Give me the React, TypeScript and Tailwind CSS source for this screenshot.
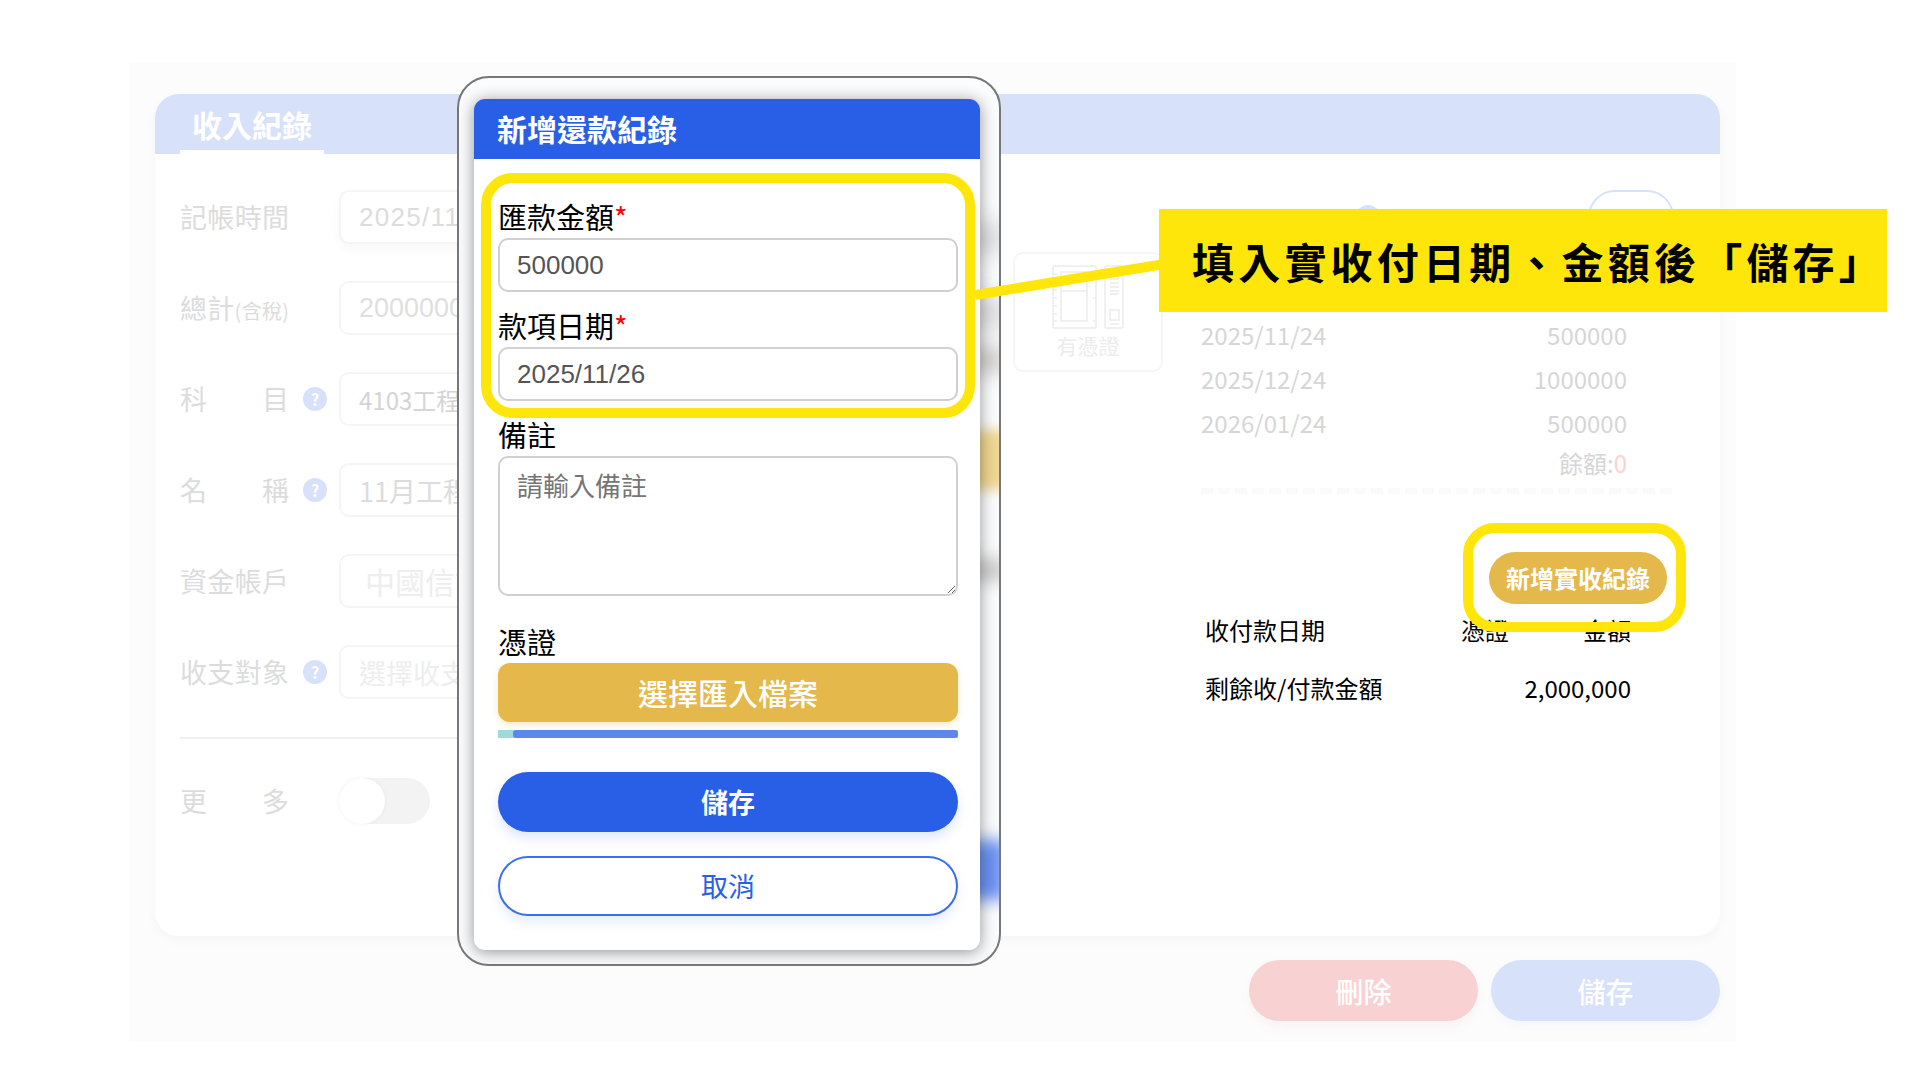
import type { ReactNode } from "react";

const schedule = [
  { date: "2025/11/24", amount: "500000" },
  { date: "2025/12/24", amount: "1000000" },
  { date: "2026/01/24", amount: "500000" },
];

function Help({ label }: { label: string }) {
  return (
    <button
      type="button"
      aria-label={label}
      className="flex size-6 items-center justify-center rounded-full bg-[#d8e1fa] text-base font-bold text-white"
    >
      ?
    </button>
  );
}

function Row({ id, label, help, children }: { id: string; label: ReactNode; help?: boolean; children: ReactNode }) {
  return (
    <div className="flex h-[54px] items-center">
      <label
        htmlFor={id}
        className="w-[109px] text-[27px] whitespace-nowrap text-[#dcdcdc] [text-align-last:justify]"
      >
        {label}
      </label>
      <div className="mr-3 ml-[14px] w-6">{help && <Help label="說明" />}</div>
      {children}
    </div>
  );
}

const fieldBox = "h-[54px] min-w-0 flex-1 rounded-[10px] border-2 border-[#f5f5f5] bg-white px-[18px] outline-none";

function VoucherIcon() {
  return (
    <svg className="h-[66px] w-[74px]" viewBox="0 0 74 66" fill="none" stroke="#f0f0f0" strokeWidth="2" aria-hidden="true">
      <rect x="2" y="2" width="43" height="62" rx="2" />
      <rect x="10" y="8" width="26" height="49" />
      <path d="M10 13h26M10 27h26" />
      <path d="M2 10h4M2 18h4M2 26h4M2 34h4M2 42h4M2 50h4M2 57h4M45 10h-3M45 34h-3M45 57h-3" />
      <rect x="54" y="2" width="18" height="62" rx="2" />
      <path d="M59 15h9M59 19h9M59 23h9M59 27h9M59 30h9M59 60h9" />
      <rect x="59" y="46" width="9" height="10" />
    </svg>
  );
}

function RecordPage() {
  return (
    <main className="mt-[62px] mr-[184px] ml-[129px] bg-[#fcfcfc] pt-8 pr-4 pb-[21px] pl-[26px]">
      <section className="overflow-hidden rounded-[24px] bg-white shadow-[0_4px_12px_rgba(0,0,0,0.03)]">
        <header className="flex h-[60px] items-end bg-[#d8e1fa] pl-[25px]">
          <h1 className="border-b-4 border-white px-3 text-[30px] leading-[52px] font-bold text-white">
            收入紀錄
          </h1>
        </header>

        <div className="flex justify-between pr-[43px] pl-[25px]">
          <form className="flex w-[480px] flex-col pt-9 pb-[111px]">
            <div className="flex flex-col gap-[37px]">
              <Row id="time" label="記帳時間">
                <input
                  id="time"
                  defaultValue="2025/11/24"
                  className={`${fieldBox} font-['Liberation_Sans','Noto_Sans_CJK_TC',sans-serif] text-[26px] tracking-wider text-[#dcdcdc] shadow-[0_6px_12px_rgba(0,0,0,0.03)]`}
                />
              </Row>
              <Row
                id="total"
                label={
                  <>
                    總計<small className="text-[20px]">(含稅)</small>
                  </>
                }
              >
                <input
                  id="total"
                  defaultValue="2000000"
                  className={`${fieldBox} font-['Liberation_Sans','Noto_Sans_CJK_TC',sans-serif] text-[27px] text-[#dfdfdf]`}
                />
              </Row>
              <Row id="subject" label="科　目" help>
                <input id="subject" defaultValue="4103工程收入" className={`${fieldBox} text-2xl text-[#d4d4d4]`} />
              </Row>
              <Row id="name" label="名　稱" help>
                <input id="name" defaultValue="11月工程款" className={`${fieldBox} text-[27px] text-[#dcdcdc]`} />
              </Row>
              <Row id="account" label="資金帳戶">
                <input
                  id="account"
                  defaultValue="中國信託"
                  className={`${fieldBox} pl-6 text-[30px] text-[#eeeeee]`}
                />
              </Row>
              <Row id="party" label="收支對象" help>
                <input
                  id="party"
                  placeholder="選擇收支對象"
                  className={`${fieldBox} text-[27px] placeholder:text-[#eeeeee]`}
                />
              </Row>
            </div>
            <hr className="mt-[38px] border-t-2 border-[#f0f0f0]" />
            <div className="mt-[38px] flex h-12 items-center">
              <label htmlFor="more" className="w-[109px] text-[27px] text-[#dcdcdc] [text-align-last:justify]">
                更　多
              </label>
              <input
                id="more"
                type="checkbox"
                role="switch"
                className="ml-[50px] h-[46px] w-[91px] appearance-none rounded-full bg-[#f3f3f3] before:block before:size-[46px] before:rounded-full before:bg-white before:shadow-[0_0_4px_rgba(0,0,0,0.05)] before:content-['']"
              />
            </div>
          </form>

          <div className="flex">
            <button
              type="button"
              className="mt-[98px] mr-[38px] flex h-[120px] w-[150px] flex-col items-center rounded-[10px] border-2 border-[#f6f6f6] pt-[10px] text-[21px] leading-[30px] text-[#ececec]"
            >
              <VoucherIcon />
              有憑證
            </button>

            <aside className="w-[476px] pt-9 text-2xl">
              <div className="flex h-[54px] items-center justify-between pr-[3px] pl-[155px]">
                <Help label="分期說明" />
                <button
                  type="button"
                  aria-label="編輯"
                  className="h-[54px] w-[86px] rounded-full border-2 border-[#d8e1fa] bg-white"
                />
              </div>
              <table className="mt-[69px] w-full text-[#d6d6d6]">
                <tbody>
                  {schedule.map((r) => (
                    <tr key={r.date} className="h-11">
                      <td>{r.date}</td>
                      <td className="pr-[50px] text-right">{r.amount}</td>
                    </tr>
                  ))}
                  <tr className="h-9">
                    <td />
                    <td className="pr-[50px] text-right">
                      餘額:<span className="text-[#ffd0d0]">0</span>
                    </td>
                  </tr>
                </tbody>
              </table>
              <div className="mt-[7px] h-[6px] bg-[repeating-linear-gradient(90deg,#fafafa_0_12px,transparent_12px_17px)]" />
              <div className="mt-[58px] flex justify-end pr-[10px]">
                <div className="relative">
                  <button
                    type="button"
                    className="h-[52px] rounded-full bg-[#e4b84a] px-[17px] font-bold whitespace-nowrap text-white"
                  >
                    新增實收紀錄
                  </button>
                  <div className="pointer-events-none absolute -top-[29px] -right-[19px] -bottom-7 -left-[26px] rounded-[32px] border-10 border-[#ffe60a]" />
                </div>
              </div>
              <table className="w-full text-black">
                <thead>
                  <tr className="h-[52px]">
                    <th className="pl-1 text-left font-normal">收付款日期</th>
                    <th className="text-right font-normal">憑證</th>
                    <th className="w-[168px] pr-[46px] text-right font-normal">金額</th>
                  </tr>
                </thead>
                <tbody>
                  <tr className="h-16">
                    <td className="pl-1">剩餘收/付款金額</td>
                    <td colSpan={2} className="pr-[46px] text-right">
                      2,000,000
                    </td>
                  </tr>
                </tbody>
              </table>
            </aside>
          </div>
        </div>
      </section>

      <footer className="mt-6 flex justify-end gap-[13px] text-[28px] font-medium text-white">
        <button
          type="button"
          className="h-[61px] w-[229px] rounded-full bg-[#f8d2d2] shadow-[0_6px_12px_rgba(240,80,80,0.06)]"
        >
          刪除
        </button>
        <button
          type="button"
          className="h-[61px] w-[229px] rounded-full bg-[#d8e1fa] shadow-[0_4px_8px_rgba(40,95,230,0.04)]"
        >
          儲存
        </button>
      </footer>
    </main>
  );
}

const modalLabel = "mb-1 block text-[29px] leading-9";
const modalField =
  "block w-full rounded-[10px] border-2 border-[#d0d0d0] bg-white px-[17px] text-[26px] text-[#555555] outline-none";

function RepaymentDialog() {
  return (
    <div className="absolute top-[76px] left-[457px] w-[544px] overflow-hidden rounded-[32px] border-2 border-[#777777] bg-[#fbfcfd] pt-[21px] pr-[19px] pb-[14px] pl-[15px]">
      <div className="absolute top-[146px] -right-2 h-[28px] w-10 bg-[#d4d6da] blur-[12px]" />
      <div className="absolute top-[220px] -right-2 h-[30px] w-10 bg-[#d6d6d8] blur-[12px]" />
      <div className="absolute top-[270px] -right-2 h-[24px] w-10 bg-[#ccc9c6] blur-[10px]" />
      <div className="absolute top-[352px] -right-2 h-[60px] w-10 bg-[#efd591] blur-[6px]" />
      <div className="absolute top-[480px] -right-2 h-[24px] w-10 bg-[#cccccc] blur-[8px]" />
      <div className="absolute top-[762px] -right-2 h-[60px] w-10 bg-[#6a90f0] blur-[8px]" />

      <div
        role="dialog"
        aria-labelledby="dialog-title"
        className="relative rounded-[11px] bg-white shadow-[0_2px_16px_rgba(0,0,0,0.42)]"
      >
        <h2
          id="dialog-title"
          className="flex h-[60px] items-center rounded-t-[11px] bg-[#285fe6] px-[23px] pb-px text-[30px] font-bold text-white"
        >
          新增還款紀錄
        </h2>
        <form className="pt-[39px] pr-[22px] pb-[34px] pl-6 text-black">
          <div className="relative">
            <label htmlFor="amount" className={modalLabel}>
              匯款金額<span className="text-[#ff0000]">*</span>
            </label>
            <input
              id="amount"
              defaultValue="500000"
              className={`${modalField} h-[54px] font-['Liberation_Sans','Noto_Sans_CJK_TC',sans-serif]`}
            />
            <div className="h-[15px]" />
            <label htmlFor="date" className={modalLabel}>
              款項日期<span className="text-[#ff0000]">*</span>
            </label>
            <input
              id="date"
              defaultValue="2025/11/26"
              className={`${modalField} h-[54px] font-['Liberation_Sans','Noto_Sans_CJK_TC',sans-serif]`}
            />
            <div className="pointer-events-none absolute -inset-x-[17px] -top-[25px] -bottom-[17px] rounded-[32px] border-10 border-[#ffe60a]" />
          </div>
          <div className="mt-[15px]">
            <label htmlFor="note" className={modalLabel}>
              備註
            </label>
            <textarea
              id="note"
              placeholder="請輸入備註"
              className={`${modalField} h-[140px] resize pt-[7px] leading-10 placeholder:text-[#757575]`}
            />
          </div>
          <div className="mt-[27px]">
            <p className={modalLabel}>憑證</p>
            <button
              type="button"
              className="block h-[59px] w-full rounded-[12px] bg-[#e4b84a] text-[30px] font-medium text-white shadow-[0_3px_6px_rgba(228,184,74,0.3)]"
            >
              選擇匯入檔案
            </button>
          </div>
          <div className="mt-2 h-2 bg-[#9cdadc] pl-[15px]">
            <div className="h-2 rounded-[3px] bg-[#5f87eb]" />
          </div>
          <button
            type="button"
            className="mt-[34px] block h-[60px] w-full rounded-full bg-[#285fe6] text-[27px] font-bold text-white shadow-[0_6px_12px_rgba(40,95,230,0.15)]"
          >
            儲存
          </button>
          <button
            type="button"
            className="mt-6 block h-[60px] w-full rounded-full border-2 border-[#3b6eea] bg-white text-[27px] text-[#285fe6] shadow-[0_6px_12px_rgba(40,95,230,0.12)]"
          >
            取消
          </button>
        </form>
      </div>
    </div>
  );
}

export default function App() {
  return (
    <div className="relative flow-root min-h-screen bg-white font-['Noto_Sans_CJK_TC',sans-serif]">
      <RecordPage />
      <RepaymentDialog />
      <svg className="absolute top-[255px] left-[975px] h-[50px] w-[190px]" viewBox="0 0 190 50" aria-hidden="true">
        <path d="M0 40L190 9" stroke="#ffe60a" strokeWidth="10" />
      </svg>
      <div className="absolute top-[209px] left-[1159px] bg-[#ffe60a] pr-[2px] pl-[33px] text-[42px] leading-[103px] font-bold tracking-widest whitespace-nowrap text-black">
        填入實收付日期、金額後「儲存」
      </div>
    </div>
  );
}
